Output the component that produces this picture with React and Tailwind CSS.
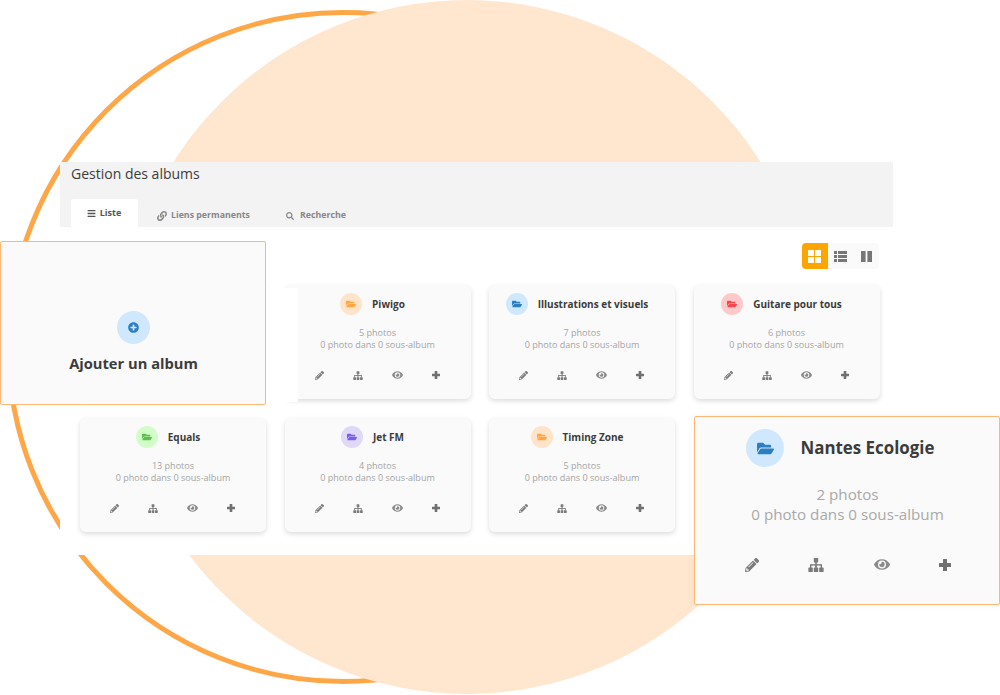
import React from "react";
import { FaFolderOpen, FaPencilAlt, FaEye, FaPlusCircle, FaLink, FaSearch, FaBars } from "react-icons/fa";

function Sitemap({ className }) {
  return (
    <svg viewBox="0 0 16 14" className={className} fill="currentColor">
      <rect x="5.8" y="0" width="4.4" height="4.4" rx="0.6" />
      <rect x="7.2" y="4" width="1.6" height="3" />
      <rect x="2" y="6.2" width="12" height="1.4" />
      <rect x="2" y="7" width="1.4" height="3" />
      <rect x="12.6" y="7" width="1.4" height="3" />
      <rect x="7.2" y="7" width="1.6" height="3" />
      <rect x="0.4" y="9.6" width="4.4" height="4.4" rx="0.6" />
      <rect x="5.8" y="9.6" width="4.4" height="4.4" rx="0.6" />
      <rect x="11.2" y="9.6" width="4.4" height="4.4" rx="0.6" />
    </svg>
  );
}

function Plus({ className }) {
  return (
    <svg viewBox="0 0 12 12" className={className} fill="currentColor">
      <rect x="4" y="0" width="4" height="12" rx="0.6" />
      <rect x="0" y="4" width="12" height="4" rx="0.6" />
    </svg>
  );
}

function Actions({ big }) {
  if (big) {
    return (
      <div className="flex items-center justify-between pl-[50px] pr-[48px] text-[#7a7a7a]">
        <FaPencilAlt className="h-[14px] w-[14px]" />
        <Sitemap className="h-[14px] w-[16px]" />
        <FaEye className="h-[15px] w-[16px] text-[#8a8a8a]" />
        <Plus className="h-[12px] w-[12px] text-[#707070]" />
      </div>
    );
  }
  return (
    <div className="flex items-center justify-between pl-[30px] pr-[31px] text-[#7a7a7a]">
      <FaPencilAlt className="h-[9px] w-[9px]" />
      <Sitemap className="h-[9px] w-[10px]" />
      <FaEye className="h-[10px] w-[11px] text-[#8a8a8a]" />
      <Plus className="h-[8px] w-[8px] text-[#707070]" />
    </div>
  );
}

function Card({ name, photos, bg, fg }) {
  return (
    <div className="h-[114px] rounded-[6px] bg-[#fafafa] pt-[8px] shadow-[0_2px_5px_rgba(0,0,0,0.14)]">
      <div className="flex h-[22px] items-center justify-center gap-[10px] pr-[10px]">
        <span className={"flex h-[22px] w-[22px] items-center justify-center rounded-full " + bg}>
          <FaFolderOpen className={"text-[10px] " + fg} />
        </span>
        <span className="text-[10px] font-bold text-[#3c3c3c]">{name}</span>
      </div>
      <div className="mt-[12px] text-center text-[9.05px] leading-[12px] text-[#a5a5a5]">
        <div>{photos}</div>
        <div>0 photo dans 0 sous-album</div>
      </div>
      <div className="mt-[19px]"><Actions /></div>
    </div>
  );
}

export default function App() {
  return (
    <div className="relative h-[695px] w-[1000px] overflow-hidden bg-white font-['Open_Sans',sans-serif]">
      <div className="absolute left-[6px] top-[10px] h-[674px] w-[674px] rounded-full border-[5px] border-[#ffa646]" />
      <div className="absolute left-[120px] top-0 h-[694px] w-[694px] rounded-full bg-[#fee7ce]" />

      <div className="relative ml-[60px] w-[833px] pt-[162px]">
        <div className="h-[65px] bg-[#f3f3f3] px-[11px]">
          <div className="pt-[2px] text-[14px] leading-[19px] text-[#3c3c3c]">Gestion des albums</div>
          <div className="mt-[16px] flex items-end text-[8.8px] font-bold text-[#888]">
            <div className="flex h-[28px] w-[67px] items-center justify-center gap-[4px] rounded-t-[3px] bg-white pr-[1px] text-[#555]">
              <FaBars className="h-[9px] w-[9px]" /><span className="text-[9px]">Liste</span>
            </div>
            <div className="flex h-[28px] items-center gap-[4px] pl-[19px] pt-[5px]"><FaLink className="h-[10px] w-[10px]" />Liens permanents</div>
            <div className="flex h-[28px] items-center gap-[6px] pl-[36px] pt-[5px]"><FaSearch className="h-[8px] w-[8px]" />Recherche</div>
          </div>
        </div>
        <div className="h-[328px] bg-white pl-[20px] pr-[13.5px] pt-[16px]">
          <div className="flex justify-end pr-[1px]">
            <div className="flex h-[26px] w-[77px] overflow-hidden rounded-[4px] bg-[#fafafa] text-[#777]">
              <span className="flex w-[26px] items-center justify-center bg-[#ffa500] text-white">
                <svg viewBox="0 0 13 13" className="h-[13px] w-[13px]" fill="currentColor">
                  <rect x="0" y="0" width="6" height="6" />
                  <rect x="7" y="0" width="6" height="6" />
                  <rect x="0" y="7" width="6" height="6" />
                  <rect x="7" y="7" width="6" height="6" />
                </svg>
              </span>
              <span className="flex w-[26px] items-center justify-center">
                <svg viewBox="0 0 13 11" className="h-[11px] w-[13px]" fill="currentColor">
                  <rect x="0" y="0" width="3" height="3" />
                  <rect x="4" y="0" width="9" height="3" />
                  <rect x="0" y="4" width="3" height="3" />
                  <rect x="4" y="4" width="9" height="3" />
                  <rect x="0" y="8" width="3" height="3" />
                  <rect x="4" y="8" width="9" height="3" />
                </svg>
              </span>
              <span className="flex w-[25px] items-center justify-center">
                <svg viewBox="0 0 11 11" className="h-[11px] w-[11px]" fill="currentColor">
                  <rect x="0" y="0" width="4.6" height="11" />
                  <rect x="6.4" y="0" width="4.6" height="11" />
                </svg>
              </span>
            </div>
          </div>
          <div className="mt-[16px] grid grid-cols-4 gap-x-[18.5px] gap-y-[19px]">
            <Card name="" photos="" bg="" fg="" />
            <Card name="Piwigo" photos="5 photos" bg="bg-[#ffe4c9]" fg="text-[#ffa646]" />
            <Card name="Illustrations et visuels" photos="7 photos" bg="bg-[#cfe8fd]" fg="text-[#2a7fc2]" />
            <Card name="Guitare pour tous" photos="6 photos" bg="bg-[#ffc9c9]" fg="text-[#f8444e]" />
            <Card name="Equals" photos="13 photos" bg="bg-[#d2fdc9]" fg="text-[#5cbf4e]" />
            <Card name="Jet FM" photos="4 photos" bg="bg-[#e0d8f7]" fg="text-[#7a5ee8]" />
            <Card name="Timing Zone" photos="5 photos" bg="bg-[#ffe4c9]" fg="text-[#ffa646]" />
          </div>
        </div>
      </div>

      <div className="absolute left-0 top-[241px] flex h-[164px] w-[266px] flex-col items-center rounded-[2px] border border-[#ffb871] bg-[#fafafa] pl-[1px] pt-[69px]">
        <span className="flex h-[33px] w-[33px] items-center justify-center rounded-full bg-[#cfe8fd]">
          <FaPlusCircle className="h-[11px] w-[11px] text-[#2a7fc2]" />
        </span>
        <span className="mt-[9px] text-[14.7px] font-bold leading-[20px] text-[#3c3c3c]">Ajouter un album</span>
      </div>
      <div className="absolute left-[266px] top-[288px] h-[114px] w-[32px] bg-white" />

      <div className="absolute left-[694px] top-[416px] h-[189px] w-[306px] rounded-[2px] border border-[#ffb871] bg-[#fafafa] pt-[12px] shadow-[0_0_6px_rgba(0,0,0,0.05)]">
        <div className="flex items-center justify-center gap-[16px] pr-[13px]">
          <span className="flex h-[38px] w-[38px] items-center justify-center rounded-full bg-[#cfe8fd]">
            <FaFolderOpen className="h-[17px] w-[17px] text-[#2a7fc2]" />
          </span>
          <span className="text-[16.9px] font-bold text-[#3c3c3c]">Nantes Ecologie</span>
        </div>
        <div className="mt-[17px] pl-[1px] text-center text-[15.2px] leading-[20px] text-[#a9a9a9]">
          <div>2 photos</div>
          <div>0 photo dans 0 sous-album</div>
        </div>
        <div className="mt-[33px]"><Actions big /></div>
      </div>
    </div>
  );
}
